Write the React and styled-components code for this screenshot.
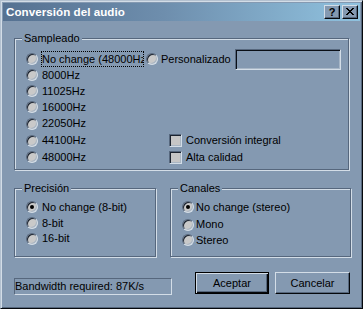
import React from "react";
import styled, { createGlobalStyle } from "styled-components";

const BG = "#8499b1";
const LIGHT = "#d3dde7";
const MID_LIGHT = "#b3c1d0";
const DARK = "#56677d";
const DARKER = "#1c2430";

const Global = createGlobalStyle`
  html, body { margin: 0; padding: 0; background: ${BG}; }
  body { width: 363px; height: 309px; overflow: hidden; }
  * { box-sizing: border-box; }
`;

const Window = styled.div`
  width: 363px;
  height: 309px;
  background: ${BG};
  border: 1px solid;
  border-color: ${MID_LIGHT} #05080c #05080c ${MID_LIGHT};
  box-shadow: inset 1px 1px 0 ${LIGHT}, inset -1px -1px 0 ${DARK};
  padding: 2px;
  display: flex;
  flex-direction: column;
  font-family: "Liberation Sans", Arial, sans-serif;
  font-size: 11px;
  color: #000;
`;

const TitleBar = styled.div`
  height: 18px;
  display: flex;
  align-items: center;
  padding: 0 2px 0 3px;
  background: linear-gradient(to right, #557191 0%, #6e8ead 45%, #90c2df 100%);
`;

const Title = styled.div`
  flex: 1;
  color: #fff;
  font-weight: bold;
  font-size: 11.6px;
  letter-spacing: 0.05px;
  line-height: 18px;
  white-space: nowrap;
`;

const CapButton = styled.div`
  width: 16px;
  height: 14px;
  margin-left: ${(p) => p.$ml || 0}px;
  background: ${BG};
  border: 1px solid;
  border-color: ${LIGHT} #05080c #05080c ${LIGHT};
  box-shadow: inset -1px -1px 0 ${DARK};
  display: flex;
  align-items: center;
  justify-content: center;
  font-weight: bold;
  font-size: 11px;
  line-height: 12px;
  padding-bottom: 1px;
`;

const Body = styled.div`
  flex: 1;
  display: flex;
  flex-direction: column;
  align-items: flex-start;
  padding: 17px 0 0 11px;
`;

const Group = styled.div`
  position: relative;
  width: ${(p) => p.$w}px;
  height: ${(p) => p.$h}px;
  border: 1px solid ${DARK};
  box-shadow: inset 1px 1px 0 ${LIGHT}, 1px 1px 0 ${LIGHT};
  padding: 12px 0 0 11px;
  margin-left: ${(p) => p.$ml || 0}px;
  display: flex;
  flex-direction: column;
`;

const GroupLabel = styled.div`
  position: absolute;
  top: -7px;
  left: 7px;
  padding: 0 2px;
  background: ${BG};
  line-height: 13px;
  white-space: nowrap;
`;

const Row = styled.div`
  display: flex;
  align-items: center;
  height: ${(p) => p.$h || 16}px;
  margin-top: ${(p) => p.$mt || 0}px;
  white-space: nowrap;
`;

const Option = styled.div`
  display: flex;
  align-items: center;
  width: ${(p) => (p.$w ? `${p.$w}px` : "auto")};
  flex: none;
`;

const Radio = styled.span`
  position: relative;
  flex: none;
  width: 12px;
  height: 12px;
  border-radius: 50%;
  background: #c9c9c9;
  border: 1px solid;
  border-color: ${DARK} ${LIGHT} ${LIGHT} ${DARK};
  box-shadow: inset 1px 1px 0 ${DARKER}, inset -1px -1px 0 #aab6c3;
  &::after {
    content: "";
    display: ${(p) => (p.$checked ? "block" : "none")};
    position: absolute;
    left: 3px;
    top: 3px;
    width: 4px;
    height: 4px;
    border-radius: 50%;
    background: #000;
  }
`;

const Check = styled.span`
  flex: none;
  width: 13px;
  height: 13px;
  background: #c6c6c6;
  border: 1px solid;
  border-color: ${DARK} ${LIGHT} ${LIGHT} ${DARK};
  box-shadow: inset 1px 1px 0 ${DARKER}, inset -1px -1px 0 #aab6c3;
`;

const Label = styled.span`
  margin-left: ${(p) => (p.$ml != null ? p.$ml : 4)}px;
  line-height: 13px;
`;

const FocusLabel = styled.span`
  margin-left: 3px;
  width: 103px;
  height: 16px;
  border: 1px dotted #000;
  padding-left: 0;
  line-height: 14px;
  overflow: hidden;
  white-space: nowrap;
`;

const TextBox = styled.div`
  flex: none;
  width: 106px;
  height: 21px;
  background: ${BG};
  border: 1px solid;
  border-color: ${DARK} ${LIGHT} ${LIGHT} ${DARK};
  box-shadow: inset 1px 1px 0 #0a0f16, inset -1px -1px 0 #a7b6c6;
`;

const BottomGroups = styled.div`
  display: flex;
  align-items: flex-start;
  margin-top: 18px;
`;

const Footer = styled.div`
  display: flex;
  align-items: flex-start;
  margin-top: 15px;
`;

const Status = styled.div`
  width: 158px;
  height: 17px;
  margin-top: 6px;
  border: 1px solid;
  border-color: ${DARK} ${LIGHT} ${LIGHT} ${DARK};
  line-height: 15px;
  padding-left: 0;
  white-space: nowrap;
`;

const Button = styled.div`
  width: ${(p) => p.$w}px;
  height: 22px;
  margin-left: ${(p) => p.$ml}px;
  background: ${BG};
  display: flex;
  align-items: center;
  justify-content: center;
  border: 1px solid;
  border-color: ${(p) =>
    p.$default ? "#000" : `${LIGHT} #05080c #05080c ${LIGHT}`};
  box-shadow: ${(p) =>
    p.$default
      ? `inset 1px 1px 0 ${LIGHT}, inset -1px -1px 0 #05080c, inset -2px -2px 0 ${DARK}`
      : `inset -1px -1px 0 ${DARK}`};
  padding-bottom: 1px;
`;

const CloseGlyph = () => (
  <svg width="8" height="7" viewBox="0 0 8 7">
    <path d="M0 0h2v1h1v1h2V1h1V0h2v1H7v1H6v1H5v1h1v1h1v1h1v1H6V6H5V5H3v1H2v1H0V6h1V5h1V4h1V3H2V2H1V1H0z" fill="#000" />
  </svg>
);

const RadioRow = ({ label, checked, h, mt, w, ml }) => (
  <Row $h={h} $mt={mt}>
    <Option $w={w}>
      <Radio $checked={checked} />
      <Label $ml={ml}>{label}</Label>
    </Option>
  </Row>
);

const CheckRow = ({ radio, check, h }) => (
  <Row $h={h}>
    <Option $w={143}>
      <Radio />
      <Label>{radio}</Label>
    </Option>
    <Check />
    <Label>{check}</Label>
  </Row>
);

export default function App() {
  return (
    <>
      <Global />
      <Window>
        <TitleBar>
          <Title>Conversión del audio</Title>
          <CapButton>?</CapButton>
          <CapButton $ml={2}>
            <CloseGlyph />
          </CapButton>
        </TitleBar>
        <Body>
          <Group $w={335} $h={132}>
            <GroupLabel>Sampleado</GroupLabel>
            <Row $h={16}>
              <Radio />
              <FocusLabel>No change (48000Hz)</FocusLabel>
              <Radio style={{ marginLeft: 2 }} />
              <Option $w={77}>
                <Label $ml={3}>Personalizado</Label>
              </Option>
              <TextBox />
            </Row>
            <RadioRow label="8000Hz" />
            <RadioRow label="11025Hz" />
            <RadioRow label="16000Hz" />
            <RadioRow label="22050Hz" h={17} />
            <CheckRow radio="44100Hz" check="Conversión integral" h={17} />
            <Row $h={16}>
              <Option $w={143}>
                <Radio />
                <Label>48000Hz</Label>
              </Option>
              <Check />
              <Label>Alta calidad</Label>
            </Row>
          </Group>
          <BottomGroups>
            <Group $w={142} $h={69} style={{ paddingTop: 10 }}>
              <GroupLabel>Precisión</GroupLabel>
              <RadioRow label="No change (8-bit)" checked />
              <RadioRow label="8-bit" />
              <RadioRow label="16-bit" h={15} />
            </Group>
            <Group $w={181} $h={69} $ml={14} style={{ paddingTop: 10 }}>
              <GroupLabel>Canales</GroupLabel>
              <RadioRow label="No change (stereo)" checked ml={2} />
              <RadioRow label="Mono" mt={2} h={15} ml={2} />
              <RadioRow label="Stereo" ml={2} />
            </Group>
          </BottomGroups>
          <Footer>
            <Status>Bandwidth required: 87K/s</Status>
            <Button $w={74} $ml={23} $default>
              Aceptar
            </Button>
            <Button $w={75} $ml={6}>
              Cancelar
            </Button>
          </Footer>
        </Body>
      </Window>
    </>
  );
}
